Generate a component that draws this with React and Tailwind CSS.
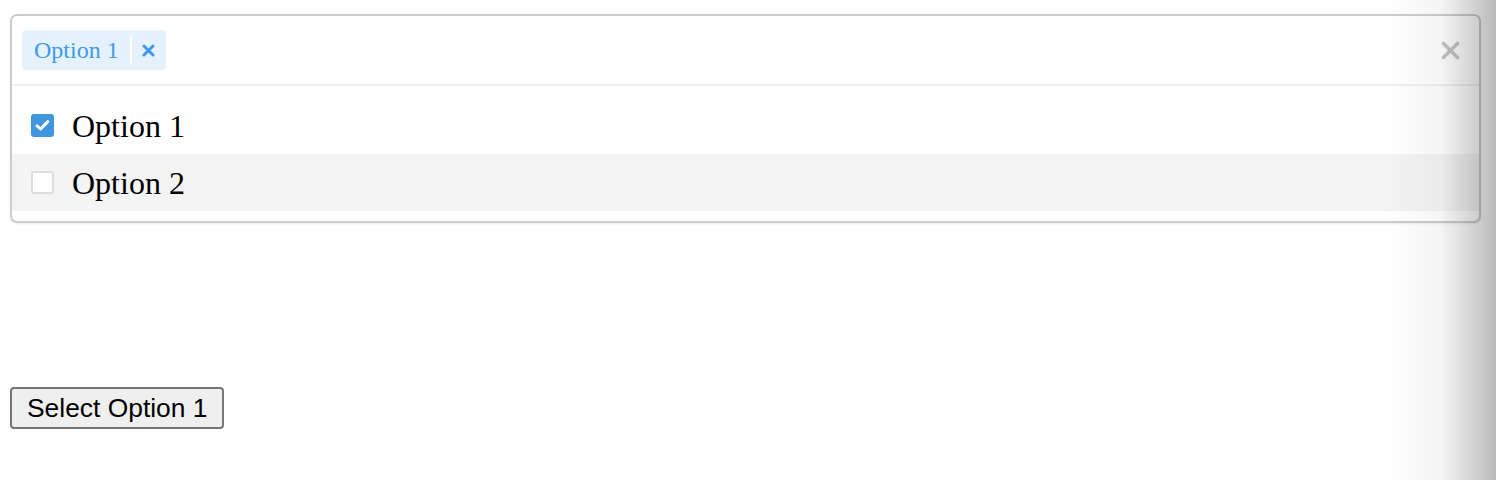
import { useState } from 'react'

const options = ['Option 1', 'Option 2']

function CheckBox({ checked }) {
  if (checked) {
    return (
      <span className="flex h-[23px] w-[23px] shrink-0 items-center justify-center rounded-[3px] bg-[#3f97e2]">
        <svg width="17" height="17" viewBox="0 0 17 17" fill="none">
          <path d="M3 8.8 L6.6 12 L13.8 4.6" stroke="white" strokeWidth="3" strokeLinecap="round" strokeLinejoin="round" />
        </svg>
      </span>
    )
  }
  return <span className="h-[23px] w-[23px] shrink-0 rounded-[3px] border-2 border-[#dedede] bg-white" />
}

export default function App() {
  const [selected, setSelected] = useState(['Option 1'])

  const toggle = (opt) =>
    setSelected((s) => (s.includes(opt) ? s.filter((x) => x !== opt) : [...s, opt]))

  return (
    <div className="relative h-[480px] w-full overflow-hidden bg-white pl-[10px] pr-[15px] pt-[14px]">
      <div className="rounded-[7px] border-2 border-[#cccccc] bg-white shadow-[0_1px_2px_rgba(0,0,0,0.08)]">
        <div className="flex h-[70px] items-center justify-between border-b-2 border-[#f0f0f0] pl-[10px] pr-[19px]">
          <div className="flex items-center gap-2">
            {selected.map((opt) => (
              <span
                key={opt}
                className="flex h-[40px] items-center rounded-[4px] bg-[#e5f2fd] pl-[12px] pr-[11px] text-[24px] text-[#3e9ae6] [font-family:'Liberation_Serif',serif]"
              >
                {opt}
                <span className="ml-[11px] mr-[10px] h-[28px] w-[2px] bg-white" />
                <button type="button" onClick={() => toggle(opt)} className="flex items-center">
                  <svg width="13" height="13" viewBox="0 0 13 13">
                    <path d="M2 2 L11 11 M11 2 L2 11" stroke="#3e9ae6" strokeWidth="3" strokeLinecap="round" />
                  </svg>
                </button>
              </span>
            ))}
          </div>
          <button type="button" onClick={() => setSelected([])} className="flex items-center">
            <svg width="19" height="19" viewBox="0 0 19 19">
              <path d="M2.5 2.5 L16.5 16.5 M16.5 2.5 L2.5 16.5" stroke="#c6c6c6" strokeWidth="3.6" strokeLinecap="round" />
            </svg>
          </button>
        </div>
        <ul className="pb-[10px] pt-[11px]">
          {options.map((opt, i) => (
            <li
              key={opt}
              onClick={() => toggle(opt)}
              className={`flex h-[57px] cursor-pointer items-center gap-[18px] pl-[19px] text-[32px] text-black [font-family:'Liberation_Serif',serif] ${i === 1 ? 'bg-[#f4f4f4]' : 'bg-white'}`}
            >
              <CheckBox checked={selected.includes(opt)} />
              <span className="leading-none">{opt}</span>
            </li>
          ))}
        </ul>
      </div>

      <button
        type="button"
        onClick={() => setSelected(['Option 1'])}
        className="mt-[164px] h-[42px] rounded-[4px] border-2 border-[#767676] bg-[#efefef] px-[15px] text-[26.4px] leading-none text-black [font-family:'Liberation_Sans',Arial,sans-serif]"
      >
        Select Option 1
      </button>

      <div className="pointer-events-none absolute right-0 top-0 h-full w-[110px] bg-gradient-to-r from-transparent via-black/[0.04] to-black/[0.27]" />
    </div>
  )
}
